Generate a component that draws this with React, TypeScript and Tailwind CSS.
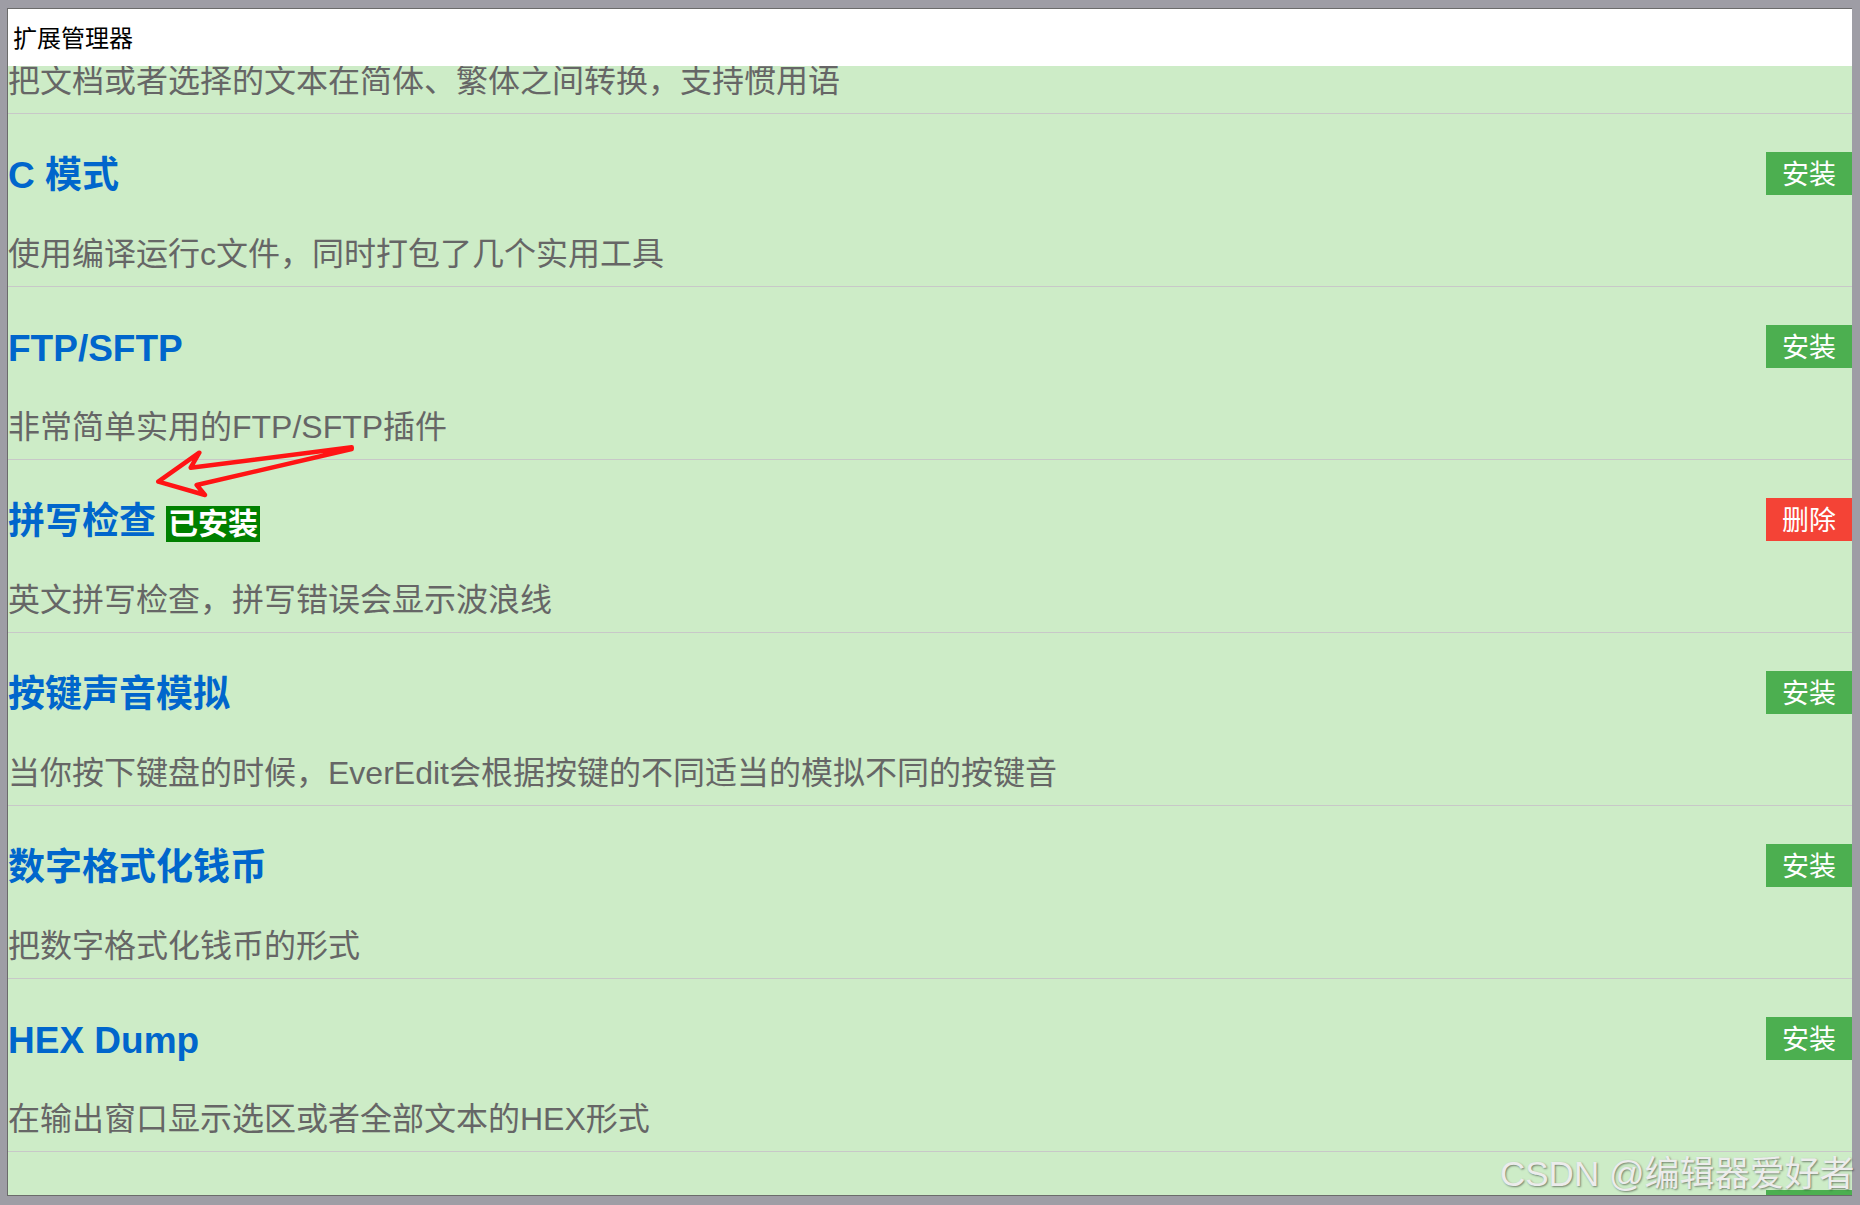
import React from "react";

type Item = {
  title: string;
  desc: string;
  installed?: boolean;
};

const items: Item[] = [
  { title: "简繁转换", desc: "把文档或者选择的文本在简体、繁体之间转换，支持惯用语" },
  { title: "C 模式", desc: "使用编译运行c文件，同时打包了几个实用工具" },
  { title: "FTP/SFTP", desc: "非常简单实用的FTP/SFTP插件" },
  { title: "拼写检查", desc: "英文拼写检查，拼写错误会显示波浪线", installed: true },
  { title: "按键声音模拟", desc: "当你按下键盘的时候，EverEdit会根据按键的不同适当的模拟不同的按键音" },
  { title: "数字格式化钱币", desc: "把数字格式化钱币的形式" },
  { title: "HEX Dump", desc: "在输出窗口显示选区或者全部文本的HEX形式" },
  { title: "", desc: "" },
];

function Row({ item }: { item: Item }) {
  return (
    <div className="pt-[38px] pb-[12px] border-b border-[#c8c8c8]">
      <div className="flex h-[43px] items-center justify-between">
        <div className="flex items-center pt-[4px]">
          <span className="text-[37px] leading-[43px] font-bold text-[#0066cc] whitespace-nowrap">
            {item.title}
          </span>
          {item.installed && (
            <span className="ml-[10px] mt-[4px] bg-[#008000] text-white text-[30px] font-bold h-[36px] leading-[36px] px-[2px] whitespace-nowrap">
              已安装
            </span>
          )}
        </div>
        {item.installed ? (
          <button className="h-[43px] px-[16px] pt-[3px] bg-[#f44336] text-white text-[27px] leading-[40px]">
            删除
          </button>
        ) : (
          <button className="h-[43px] px-[16px] pt-[3px] bg-[#4caf50] text-white text-[27px] leading-[40px]">
            安装
          </button>
        )}
      </div>
      <div className="mt-[39px] h-[40px] text-[32px] leading-[40px] text-[#666666] whitespace-nowrap">
        {item.desc}
      </div>
    </div>
  );
}

export default function App() {
  return (
    <div className="relative w-[1860px] h-[1205px] overflow-hidden bg-[#9e9da5] pt-[8px] pl-[7px] pr-[8px] pb-[9px] font-['Liberation_Sans','Noto_Sans_CJK_SC',sans-serif]">
      <div className="flex h-full flex-col border-t border-l border-b border-[#6b6b6b]">
        <div className="relative z-10 flex h-[57px] shrink-0 items-center bg-white pl-[5px] pb-[2px] text-[24px] text-black font-['Noto_Sans_CJK_SC',sans-serif]">
          扩展管理器
        </div>
        <div className="flex-1 overflow-hidden bg-[#cdecc7]">
          <div className="-mt-[125px]">
            {items.map((it, i) => (
              <Row key={i} item={it} />
            ))}
          </div>
        </div>
      </div>

      <svg
        className="absolute left-[150px] top-[440px] pointer-events-none"
        width="215"
        height="65"
        viewBox="0 0 215 65"
      >
        <path
          d="M201.7 7.3 L40.7 27.7 L49.3 12.7 L8.3 41.7 L55 55 L46.7 45 L201.7 9 Z"
          fill="none"
          stroke="#ff1414"
          strokeWidth="4.5"
          strokeLinejoin="round"
          strokeLinecap="round"
        />
      </svg>

      <div className="absolute left-[1500px] top-[1151px] whitespace-nowrap text-[35px] leading-[46px] text-[#ececec] [text-shadow:1px_1px_2px_rgba(0,0,0,0.45)]">
        CSDN @编辑器爱好者
      </div>
    </div>
  );
}
